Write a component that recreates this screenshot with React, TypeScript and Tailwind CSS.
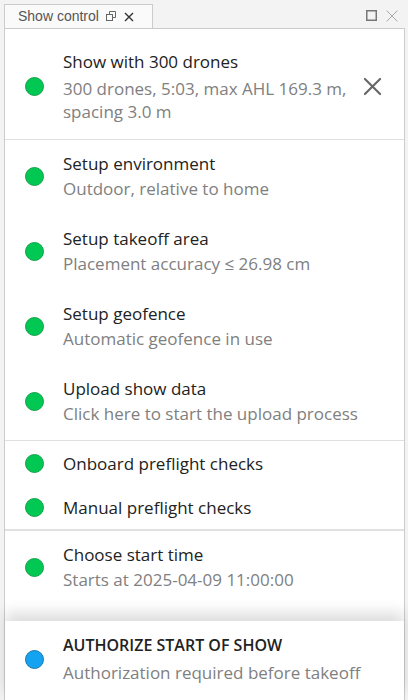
import React from 'react';

type Step = {
  title: string;
  subtitle?: string;
  color?: 'green' | 'blue';
};

const Dot: React.FC<{ color?: 'green' | 'blue' }> = ({ color = 'green' }) => (
  <span
    className={
      color === 'green'
        ? 'block w-[19px] h-[19px] rounded-full bg-[#00c853] border border-[#13a04a]'
        : 'block w-[19px] h-[19px] rounded-full bg-[#14a3f0] border border-[#1a78b0]'
    }
  />
);

const StepRow: React.FC<{ step: Step }> = ({ step }) => (
  <div className={step.subtitle ? 'flex items-center pl-[20px] pr-[12px] pt-[11px] pb-[14px]' : 'flex items-center pl-[20px] pr-[12px] h-[44px]'}>
    <div className="w-[38px] shrink-0">
      <Dot color={step.color} />
    </div>
    <div className="flex-1 min-w-0">
      <div className="text-[17px] leading-[25px] text-[#222]">{step.title}</div>
      {step.subtitle && <div className="text-[17px] leading-[25px] text-[#808080]">{step.subtitle}</div>}
    </div>
  </div>
);

const setupSteps: Step[] = [
  { title: 'Setup environment', subtitle: 'Outdoor, relative to home' },
  { title: 'Setup takeoff area', subtitle: 'Placement accuracy ≤ 26.98 cm' },
  { title: 'Setup geofence', subtitle: 'Automatic geofence in use' },
  { title: 'Upload show data', subtitle: 'Click here to start the upload process' },
];

const checkSteps: Step[] = [{ title: 'Onboard preflight checks' }, { title: 'Manual preflight checks' }];

export default function App() {
  return (
    <div className="w-[408px] h-[700px] overflow-hidden bg-[#f3f3f3] flex flex-col" style={{ fontFamily: '"Open Sans", "Noto Sans", sans-serif' }}>
      {/* tab strip */}
      <div className="h-[28px] shrink-0 flex items-end pl-[4px] pr-[10px]">
        <div className="h-[24px] w-[149px] bg-[#fafafa] border border-b-0 border-[#cccccc] flex items-center pl-[13px] gap-[7px] text-[14px] text-[#555]" style={{ fontFamily: '"Liberation Sans", Arial, sans-serif' }}>
          <span>Show control</span>
          <svg width="11" height="11" viewBox="0 0 11 11" fill="none" stroke="#666" strokeWidth="1">
            <rect x="0.5" y="3.5" width="6" height="6" />
            <path d="M3.5 3.5V0.5h6v6h-3" />
          </svg>
          <svg width="10" height="10" viewBox="0 0 10 10" stroke="#333" strokeWidth="1.4">
            <path d="M1 1l8 8M9 1l-8 8" />
          </svg>
        </div>
        <div className="flex-1" />
        <div className="flex items-center gap-[9px] self-center pt-[3px]">
          <svg width="11" height="11" viewBox="0 0 11 11" fill="none" stroke="#777" strokeWidth="1.5">
            <rect x="0.75" y="0.75" width="9.5" height="9.5" />
          </svg>
          <svg width="12" height="12" viewBox="0 0 12 12" stroke="#aaa" strokeWidth="1">
            <path d="M0.5 0.5l11 11M11.5 0.5l-11 11" />
          </svg>
        </div>
      </div>

      {/* panel */}
      <div className="flex-1 ml-[4px] mr-[3px] bg-white border border-b-0 border-[#cccccc] flex flex-col min-h-0">
        <div className="flex-1 min-h-0 overflow-hidden pt-[8px]">
          <div className="flex items-center pl-[20px] pr-[12px] pt-[12px] pb-[16px]">
            <div className="w-[38px] shrink-0">
              <Dot />
            </div>
            <div className="flex-1 min-w-0">
              <div className="text-[17px] leading-[25px] text-[#222]">Show with 300 drones</div>
              <div className="mt-[3px] text-[17px] leading-[23px] text-[#808080]">300 drones, 5:03, max AHL 169.3 m, spacing 3.0 m</div>
            </div>
            <button className="w-[40px] h-[40px] flex items-center justify-center shrink-0 ml-[4px]">
              <svg width="19" height="19" viewBox="0 0 20 20" stroke="#666" strokeWidth="2.2" strokeLinecap="round">
                <path d="M2 2l16 16M18 2L2 18" />
              </svg>
            </button>
          </div>
          <div className="h-px bg-[#e0e0e0]" />
          {setupSteps.map((s) => (
            <StepRow key={s.title} step={s} />
          ))}
          <div className="h-px bg-[#e0e0e0]" />
          {checkSteps.map((s) => (
            <StepRow key={s.title} step={s} />
          ))}
          <div className="h-[2px] bg-[#e0e0e0]" />
          <StepRow step={{ title: 'Choose start time', subtitle: 'Starts at 2025-04-09 11:00:00' }} />
        </div>

        {/* sticky footer */}
        <div className="shrink-0 bg-white shadow-[0_-8px_14px_rgba(0,0,0,0.14)] pt-[11px] pb-[14px]">
          <div className="flex items-center pl-[20px] pr-[12px]">
            <div className="w-[38px] shrink-0">
              <Dot color="blue" />
            </div>
            <div className="flex-1 min-w-0">
              <div className="text-[16px] leading-[27px] font-semibold text-[#222]">AUTHORIZE START OF SHOW</div>
              <div className="text-[17px] leading-[27px] text-[#808080]">Authorization required before takeoff</div>
            </div>
          </div>
        </div>
      </div>
    </div>
  );
}
